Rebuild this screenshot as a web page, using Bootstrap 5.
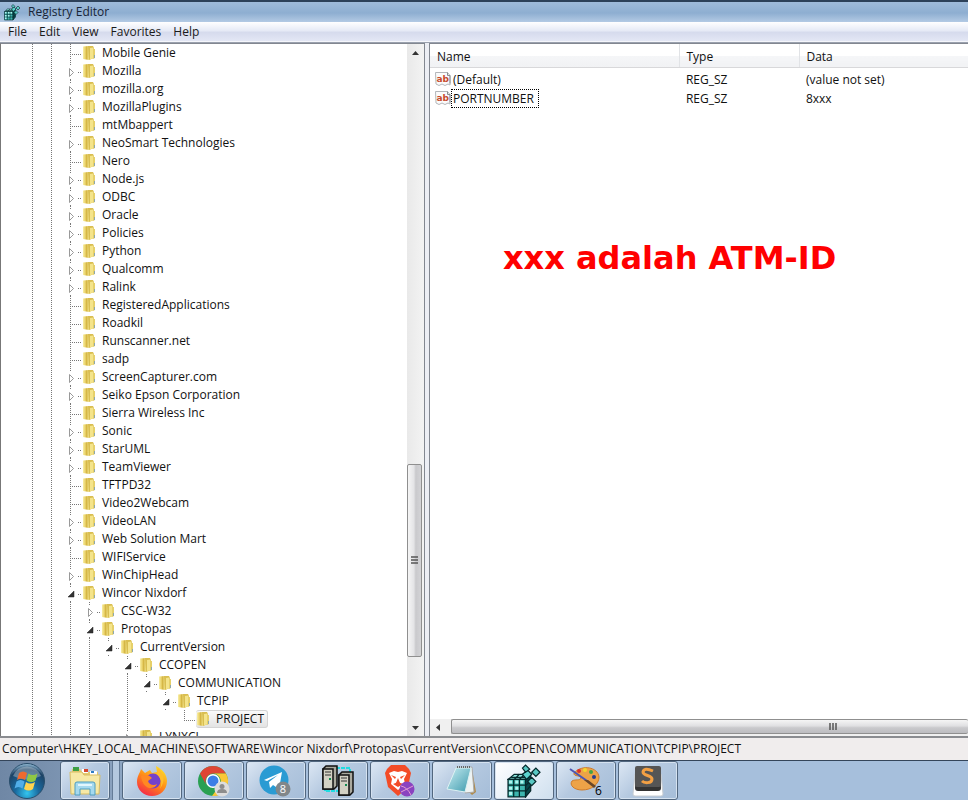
<!DOCTYPE html>
<html lang="en">
<head>
<meta charset="utf-8">
<meta name="viewport" content="width=device-width, initial-scale=1">
<title>Registry Editor</title>
<link rel="stylesheet" href="https://cdn.jsdelivr.net/npm/bootstrap@5.3.0/dist/css/bootstrap.min.css">
<style>
body{font:12px/18px "Open Sans","Noto Sans",sans-serif;color:#111;background:#f0eded}
.titlebar{height:22px;border-top:2px solid #2d4159;background:linear-gradient(#9fbbda,#8eaed1 55%,#b3cae4);color:#182436}
.menubar{height:20px;background:linear-gradient(#fff,#e6eaf6 45%,#d6dbed 55%,#e3e7f5);border-bottom:1px solid #f5f6fb}
.menubar button{font-size:12px;line-height:18px;color:#1a1a1a}
.workspace{background:#eceef4;gap:4px;border-top:1px solid #9aa1ae}
.pane{background:#fff;border:1px solid #828790;border-bottom:0}
.tree-pane{width:43.9%;border-left-color:#777}
.tree-row{height:18px;padding-left:22px}
.tree-row>svg{flex:none}
.tree-label{font-size:12px;line-height:18px;color:#111;margin-left:6px;white-space:nowrap}
.picked{border:1px solid #d4d4d4;border-left:0;border-radius:3px;background:linear-gradient(#fafafa,#e3e3e3);height:18px;padding-right:3px}
.picked .tree-label{line-height:16px}
.vbar{width:17px;background:linear-gradient(90deg,#e9e9e9,#f3f3f3)}
.hbar{height:17px;background:#f0f0f0}
.bar-btn{width:17px;height:17px;flex:none}
.above{flex:404}.vthumb{flex:192}.below{flex:62}
.vthumb{border:1px solid #8f8f8f;border-radius:2px;background:linear-gradient(90deg,#f5f5f5,#e4e4e6 45%,#c9c9cc 60%,#d3d3d6);width:15px}
.hthumb{border:1px solid #8f8f8f;border-right:0;border-radius:2px;background:linear-gradient(#f5f5f5,#e0e0e2 45%,#c9c9cc 60%,#bcbcc0);padding-left:247px;height:15px}
.values{table-layout:fixed}
.values th{height:23px;line-height:17px;font-weight:400;padding:2px 7px 0 6px;background:linear-gradient(#fff 50%,#f5f6f8 51%,#f1f2f4);border-bottom:1px solid #d8d8da;border-right:1px solid #e1e3e6}
.values th:last-child{border-right:0}
.values th:first-child{padding-left:7px}
.values td{height:19px;line-height:17px;padding:0 6px;vertical-align:middle}
.values td:first-child{padding-left:5px}
.values tbody tr:first-child td{height:21px;padding-top:2px}
.c-name{width:250px}.c-type{width:120px}
.val-name{height:19px;padding:0 4px 0 1px;border:1px dotted transparent}
.val-focus{border-color:#000}
.note{font:bold 32px/40px "DejaVu Sans",Verdana,sans-serif;color:#f00;margin:130px 0 0 73px}
.statusbar{height:24px;border-top:2px solid #8a8c90;padding:2px 2px 0;background:#f0eded}
.taskbar{height:40px;border-top:1px solid #34455a;background:linear-gradient(90deg,#6f87a5,#8199b6 9%,#a6bfdc 20%);gap:2px}
.start-btn{width:58px;padding:0 0 0 8px}
.task{width:60px;height:39px;padding:0;border:1px solid #52677f;border-radius:3px;background:linear-gradient(135deg,#dce7f4,#b5c9e0 45%,#a5bdd8);box-shadow:inset 0 0 0 1px #d5e2f0}
.task-first{width:50px}
.task-active{background:linear-gradient(135deg,#fff,#e6eff8 50%,#cfdfee)}
.grip{width:8px;height:39px;border-left:1px solid #647c98;border-right:1px solid #647c98;background:#b3c8df}
</style>
<script src="https://cdn.jsdelivr.net/npm/bootstrap@5.3.0/dist/js/bootstrap.bundle.min.js"></script>
</head>
<body class="vh-100 d-flex flex-column overflow-hidden">
<svg class="position-absolute" width="0" height="0" aria-hidden="true">
  <defs>
    <linearGradient id="gold"><stop stop-color="#f9efa6"/><stop offset=".45" stop-color="#e5cb5e"/><stop offset=".6" stop-color="#d3b443"/><stop offset="1" stop-color="#f5e68e"/></linearGradient>
    <radialGradient id="orb" cx=".5" cy=".85" r=".85"><stop stop-color="#33c5ef"/><stop offset=".4" stop-color="#19699e"/><stop offset=".8" stop-color="#1d4265"/><stop offset="1" stop-color="#9cc3dc"/></radialGradient>
    <linearGradient id="fire" x1=".8" y1="0" x2=".2" y2="1"><stop stop-color="#ffe226"/><stop offset=".5" stop-color="#ff8a16"/><stop offset="1" stop-color="#f5214d"/></linearGradient>
    <linearGradient id="paper" x1="0" y1="0" x2="1" y2="1"><stop stop-color="#c8edf2"/><stop offset="1" stop-color="#3d9aad"/></linearGradient>
    <symbol id="folder" viewBox="0 0 14 16"><path d="M1 1.500 7 1v14l-6-1z" fill="url(#gold)"/><path d="M6 1h5l1 2v10l-5 2z" fill="#d9be51"/><path d="m8 3 3.500-.5V13L8 14.500z" fill="#f4e48b"/><path d="M11 4h2v9l-2 1z" fill="#e6d06a"/><path d="M12.500 10v3" stroke="#8fa8ac"/></symbol>
    <symbol id="string" viewBox="0 0 16 16"><path d="M.5 1.500h12l2.500 3V14l-2-1-3 1.500-3-1.500-3 1.500-3-1.500z" fill="#fbfbfb" stroke="#b3b6ba"/><path d="M12.500 1.500v3H15v8" fill="none" stroke="#888d92"/><text x="1.500" y="10.500" font-family="DejaVu Sans,sans-serif" font-size="9" font-weight="700" fill="#c64a2c">ab</text></symbol>
    <symbol id="cubes" viewBox="0 0 32 32" overflow="visible"><g stroke="#05282b" stroke-width="1.200"><path d="m1 13 6-5h16l-5 5z" fill="#8eeae2"/><path d="M1 13h17v17H1z" fill="#3cb5ae"/><path d="m18 13 5-5v16l-5 6z" fill="#06474a"/><path d="M1 18.500h17M1 24h17M6.500 13v17m5.500-17v17m-8-19h17M12 8l-5 5m10-5-5 5m6 6 5-5m-5 11 5-6" fill="none"/><path d="m15 8 5-4 4 4-5 5z" fill="#5bd3ce"/><path d="m15 2 3-3 4 4-4 3zM24 6l4-4 4 4-4 4zm-4 9 4-4 4 4-4 4z" fill="#59c7c3"/></g><path d="M2 14h3v3H2zm6 0h3v3H8zm5 0h3v3h-3zM2 20h3v3H2zm6 0h3v3H8zm-6 5h3v3H2z" fill="#b2f3ee"/></symbol>
  </defs>
</svg>

<header class="titlebar d-flex align-items-center flex-shrink-0">
  <svg class="ms-1 me-2" width="16" height="17" viewBox="0 -2 32 34"><use href="#cubes" width="32" height="32"/></svg>
  <span>Registry Editor</span>
</header>
<nav class="menubar d-flex align-items-center flex-shrink-0" aria-label="Menu">
  <button class="btn border-0 py-0 ps-2 pe-1">File</button>
  <button class="btn border-0 py-0 px-2">Edit</button>
  <button class="btn border-0 py-0 ps-1 pe-2">View</button>
  <button class="btn border-0 py-0 ps-1 pe-2">Favorites</button>
  <button class="btn border-0 py-0 ps-1 pe-2">Help</button>
</nav>

<main class="workspace d-flex flex-grow-1 overflow-hidden">
  <section class="pane tree-pane d-flex flex-shrink-0 overflow-hidden" aria-label="Keys">
    <div id="tree" class="flex-grow-1 overflow-hidden" role="tree"></div>
    <div class="vbar d-flex flex-column flex-shrink-0">
      <button class="btn bar-btn p-0 border-0 d-flex align-items-center justify-content-center" aria-label="Scroll up"><svg width="7" height="4"><path d="m0 4 3.500-4L7 4z" fill="#333"/></svg></button>
      <div class="above"></div>
      <div class="vthumb d-flex align-items-center justify-content-center"><svg width="7" height="9"><path d="M0 1h7M0 4h7M0 7h7" stroke="#555" stroke-width="1.500"/></svg></div>
      <div class="below"></div>
      <button class="btn bar-btn p-0 border-0 d-flex align-items-center justify-content-center" aria-label="Scroll down"><svg width="7" height="4"><path d="m0 0 3.500 4L7 0z" fill="#333"/></svg></button>
    </div>
  </section>
  <section class="pane border-end-0 d-flex flex-column flex-grow-1 overflow-hidden" aria-label="Values">
    <table class="values w-100">
      <colgroup><col class="c-name"><col class="c-type"><col></colgroup>
      <thead><tr><th>Name</th><th>Type</th><th>Data</th></tr></thead>
      <tbody>
        <tr><td><div class="d-flex align-items-center"><svg width="16" height="16"><use href="#string"/></svg><span class="val-name">(Default)</span></div></td><td>REG_SZ</td><td>(value not set)</td></tr>
        <tr><td><div class="d-flex align-items-center"><svg width="16" height="16"><use href="#string"/></svg><span class="val-name val-focus">PORTNUMBER</span></div></td><td>REG_SZ</td><td>8xxx</td></tr>
      </tbody>
    </table>
    <p class="note">xxx adalah ATM-ID</p>
    <div class="hbar d-flex mt-auto flex-shrink-0">
      <button class="btn bar-btn p-0 border-0 d-flex align-items-center justify-content-center me-1" aria-label="Scroll left"><svg width="4" height="7"><path d="M4 0 0 3.500 4 7z" fill="#333"/></svg></button>
      <div class="hthumb flex-grow-1 d-flex justify-content-center align-items-center pe-0"><svg width="9" height="7"><path d="M1 0v7M4 0v7M7 0v7" stroke="#555" stroke-width="1.500"/></svg></div>
    </div>
  </section>
</main>

<footer class="statusbar flex-shrink-0 text-nowrap overflow-hidden">Computer\HKEY_LOCAL_MACHINE\SOFTWARE\Wincor Nixdorf\Protopas\CurrentVersion\CCOPEN\COMMUNICATION\TCPIP\PROJECT</footer>

<nav class="taskbar d-flex flex-shrink-0 overflow-hidden" aria-label="Taskbar">
  <button class="btn start-btn border-0 d-flex align-items-center" aria-label="Start"><svg width="38" height="38" viewBox="0 0 38 38"><circle cx="19" cy="19" r="17.500" fill="url(#orb)" stroke="#294e6c"/><path d="M5 14a15 15 0 0 1 28 0q-14 7-28 0" fill="#fff" opacity=".3"/><path d="M11 11q4-3 8 0l-2 7q-4-3-8 0z" fill="#ef6a2f"/><path d="M20.500 11.500q4 3 9 0l-2 7q-4 3-9 0z" fill="#90c744"/><path d="M8.500 19.500q4-3 8 0l-2 7q-4-3-8 0z" fill="#51aee8"/><path d="M18 20q4 3 9 0l-2 7q-4 3-9 0z" fill="#ffd34e"/></svg></button>
  <button class="btn task task-first" aria-label="File Explorer"><svg width="34" height="34" viewBox="0 0 34 34"><path d="M4 5h8l2 3h16v20H4z" fill="#e5ca6f"/><path d="M5 3h6v4H5z" fill="#3d9f45"/><path d="M14 5h6v4h-6z" fill="#fff"/><path d="M16 5h4v3h-4z" fill="#d8472e"/><path d="M22 7h7v4h-7z" fill="#fff"/><path d="M23 7h3v2h-3z" fill="#307ec5"/><path d="M2 8h12l2 3h16l-1 19H3z" fill="#f7e9a6" stroke="#d7bd65"/><path d="M7 31V20q0-2 2-2h16q2 0 2 2v11h-5v-6H12v6z" fill="#a5d9ee" stroke="#4e9dbf"/><path d="M10 20h14v2H10z" fill="#e2f6fd"/></svg></button>
  <span class="grip"></span>
  <button class="btn task" aria-label="Firefox"><svg width="34" height="34" viewBox="0 0 34 34"><path d="M2 18C2 12 5 9 6 5l4 4 5-3 2 3 5-1-1-6c6 3 11 8 11 15 0 9-7 15-15 15S2 26 2 18z" fill="url(#fire)"/><circle cx="18" cy="17" r="7.500" fill="#7441cb"/><path d="M6 12c5-2 8-1 11 2l-4 3c1 4 6 5 9 3-2 6-14 7-16-8" fill="#ff8922"/><path d="M23 4c6 6 8 12 2 21 3-9 0-11-3-15z" fill="#ffbd2b"/></svg></button>
  <button class="btn task" aria-label="Chrome"><svg width="36" height="34" viewBox="0 0 36 34"><circle cx="17" cy="17" r="15" fill="#2aa052"/><path d="M4 9.500a15 15 0 0 1 26 0H17a8 8 0 0 0-7 11z" fill="#df4535"/><path d="M17 9.500h13A15 15 0 0 1 16 32l8-11a8 8 0 0 0-7-11.500" fill="#fac737"/><circle cx="17" cy="17" r="7" fill="#fff"/><circle cx="17" cy="17" r="5.500" fill="#3b7ee6"/><circle cx="26" cy="25" r="7.500" fill="#ddd"/><circle cx="26" cy="22.500" r="2.500" fill="#8d8d8d"/><path d="M21 29q0-4 5-4t5 4z" fill="#8d8d8d"/></svg></button>
  <button class="btn task" aria-label="Telegram"><svg width="36" height="34" viewBox="0 0 36 34"><circle cx="16" cy="16" r="14.500" fill="#2a9bd3"/><path d="m6 16 18-8-3 17-6-4-3 3-1-6 9-7-11 6z" fill="#fff"/><circle cx="25" cy="25" r="7.500" fill="#81878a"/><text x="25" y="29" text-anchor="middle" font-size="11" fill="#fff">8</text></svg></button>
  <button class="btn task" aria-label="Servers"><svg width="34" height="32" viewBox="0 0 34 32"><path d="M15 3h14v4M4 22v4h14" fill="none" stroke="#20dbe1" stroke-width="2" stroke-dasharray="4 1"/><g stroke="#111" stroke-width="1.500"><path d="m2 4 3-3h11v20l-3 3H2z" fill="#aaa99e"/><path d="M2 4h10v20H2z" fill="#d2d1c4"/><path d="m18 10 3-3h11v20l-3 3H18z" fill="#aaa99e"/><path d="M18 10h10v20H18z" fill="#d2d1c4"/></g><path d="M4 7h6M4 10h6m10 3h6m-6 3h6" stroke="#333"/><path d="M8 14h2m14 6h2" stroke="#118b50" stroke-width="2"/></svg></button>
  <button class="btn task" aria-label="Brave"><svg width="34" height="34" viewBox="0 0 34 34"><path d="m8 1 14 0 4 4 2 4-3 14-10 9L5 23 2 9l2-4z" fill="#f34c27"/><path d="m6 9 5-2 4 1 4-1 5 2-3 6 1 5-7 6-7-6 1-5z" fill="#fff"/><path d="m8 11 5 2-1 2zm14 0-5 2 1 2zm-7 3-2 5 2 2 2-2z" fill="#f34c27"/><path d="m10 20 5-2 5 2-5 3z" fill="#f34c27"/><circle cx="24" cy="25" r="7.500" fill="#8a43c0"/><path d="M18 22q6 1 10 9m-10-3 12-6" stroke="#e49dd3" fill="none"/></svg></button>
  <button class="btn task" aria-label="Notepad"><svg width="34" height="34" viewBox="0 0 34 34"><path d="m27 5 4 23-4 3-3-3z" fill="#b08b4a"/><path d="m11 4 16-1 2 25-9 1z" fill="#eef3f3" stroke="#aaa"/><path d="M11 4h15l-6 24-18-3z" fill="url(#paper)" stroke="#ddf2f3"/><path d="M12 3h14" stroke="#666" stroke-width="2" stroke-dasharray="1 1"/></svg></button>
  <button class="btn task task-active" aria-label="Registry Editor"><svg width="34" height="34" viewBox="0 -2 33 33"><use href="#cubes" width="32" height="32"/></svg></button>
  <button class="btn task" aria-label="Paint"><svg width="36" height="34" viewBox="0 0 36 34"><path d="M6 9C14 0 30 3 31 13c0 7-7 13-17 13C6 26 1 21 4 17c3-2 8 0 9-3s-8-1-7-5" fill="#eda347" stroke="#cf7c29"/><circle cx="11" cy="7" r="2" fill="#db302a"/><circle cx="17" cy="6" r="2" fill="#f2d62c"/><circle cx="23" cy="8" r="2" fill="#44a244"/><circle cx="26" cy="13" r="2" fill="#293d8d"/><path d="m2 5 20 14" stroke="#4c55b3" stroke-width="2"/><path d="m16 16 10 8 2-2-8-6z" fill="#6a4728"/><text x="27" y="31" font-size="12" fill="#000">6</text></svg></button>
  <button class="btn task" aria-label="Sublime Text"><svg width="34" height="32" viewBox="0 0 34 32"><path d="M4 9 2 29q0 2 2 2h26q2 0 2-2L30 9z" fill="#fff" stroke="#c8ccd0"/><path d="M5 2h24l1 21q0 3-3 3H7q-3 0-3-3z" fill="#333"/><path d="M6 1h22q2 0 2 2v17q0 2-2 2H6q-2 0-2-2V3q0-2 2-2z" fill="#555"/><path d="M22 6q-9-4-10 1c0 4 9 3 9 7 0 5-8 4-10 2" fill="none" stroke="#f3a044" stroke-width="3"/></svg></button>
</nav>

<script>
// Each entry: guides, expander, label. Guides: "|" dotted line, "." blank.
// Expander: ">" closed, "v" open, "-" leaf, "L" last leaf.
const rows = [
  ...`-Mobile Genie,>Mozilla,>mozilla.org,>MozillaPlugins,-mtMbappert,>NeoSmart Technologies,-Nero,>Node.js,>ODBC,>Oracle,>Policies,>Python,>Qualcomm,>Ralink,-RegisteredApplications,-Roadkil,-Runscanner.net,-sadp,>ScreenCapturer.com,>Seiko Epson Corporation,-Sierra Wireless Inc,>Sonic,>StarUML,>TeamViewer,-TFTPD32,-Video2Webcam,>VideoLAN,>Web Solution Mart,-WIFIService,>WinChipHead,vWincor Nixdorf`
    .split(',').map(s => ['||', s[0], s.slice(1)]),
  ['|||', '>', 'CSC-W32'],
  ['|||', 'v', 'Protopas'],
  ['||||', 'v', 'CurrentVersion'],
  ['||||.', 'v', 'CCOPEN'],
  ['||||.|', 'v', 'COMMUNICATION'],
  ['||||.|.', 'v', 'TCPIP'],
  ['||||.|..', 'L', 'PROJECT'],
  ['||||.', '>', 'LYNXCI']
];
const dots = 'stroke="#777" stroke-dasharray="1 1" fill="none"';
const guide = g => `<svg width="19" height="18">${g === '|' ? `<path d="M9.500 0v18" ${dots}/>` : ''}</svg>`;
const joints = {
  '-': `<path d="M9.500 0v18M11 10.500h10" ${dots}/>`,
  'L': `<path d="M9.500 0v11M11 10.500h10" ${dots}/>`,
  '>': `<path d="M9.500 0v3M9.500 17v1M17 10.500h4" ${dots}/><path d="M8.500 6.500v8l4-4z" fill="#fff" stroke="#999"/>`,
  'v': `<path d="M9.500 0v3M9.500 17v1M17 10.500h4" ${dots}/><path d="M13 7v6H7z" fill="#333" stroke="#222" stroke-width=".5"/>`
};
document.getElementById('tree').innerHTML = rows.map(([g, x, name]) => {
  const item = `<svg class="flex-shrink-0" width="14" height="16"><use href="#folder"/></svg><span class="tree-label">${name}</span>`;
  return `<div class="tree-row d-flex align-items-center" role="treeitem">${[...g].map(guide).join('')}` +
    `<svg width="21" height="18">${joints[x]}</svg>` +
    (x === 'L' ? `<span class="picked d-flex align-items-center">${item}</span>` : item) + '</div>';
}).join('');
</script>
</body>
</html>
